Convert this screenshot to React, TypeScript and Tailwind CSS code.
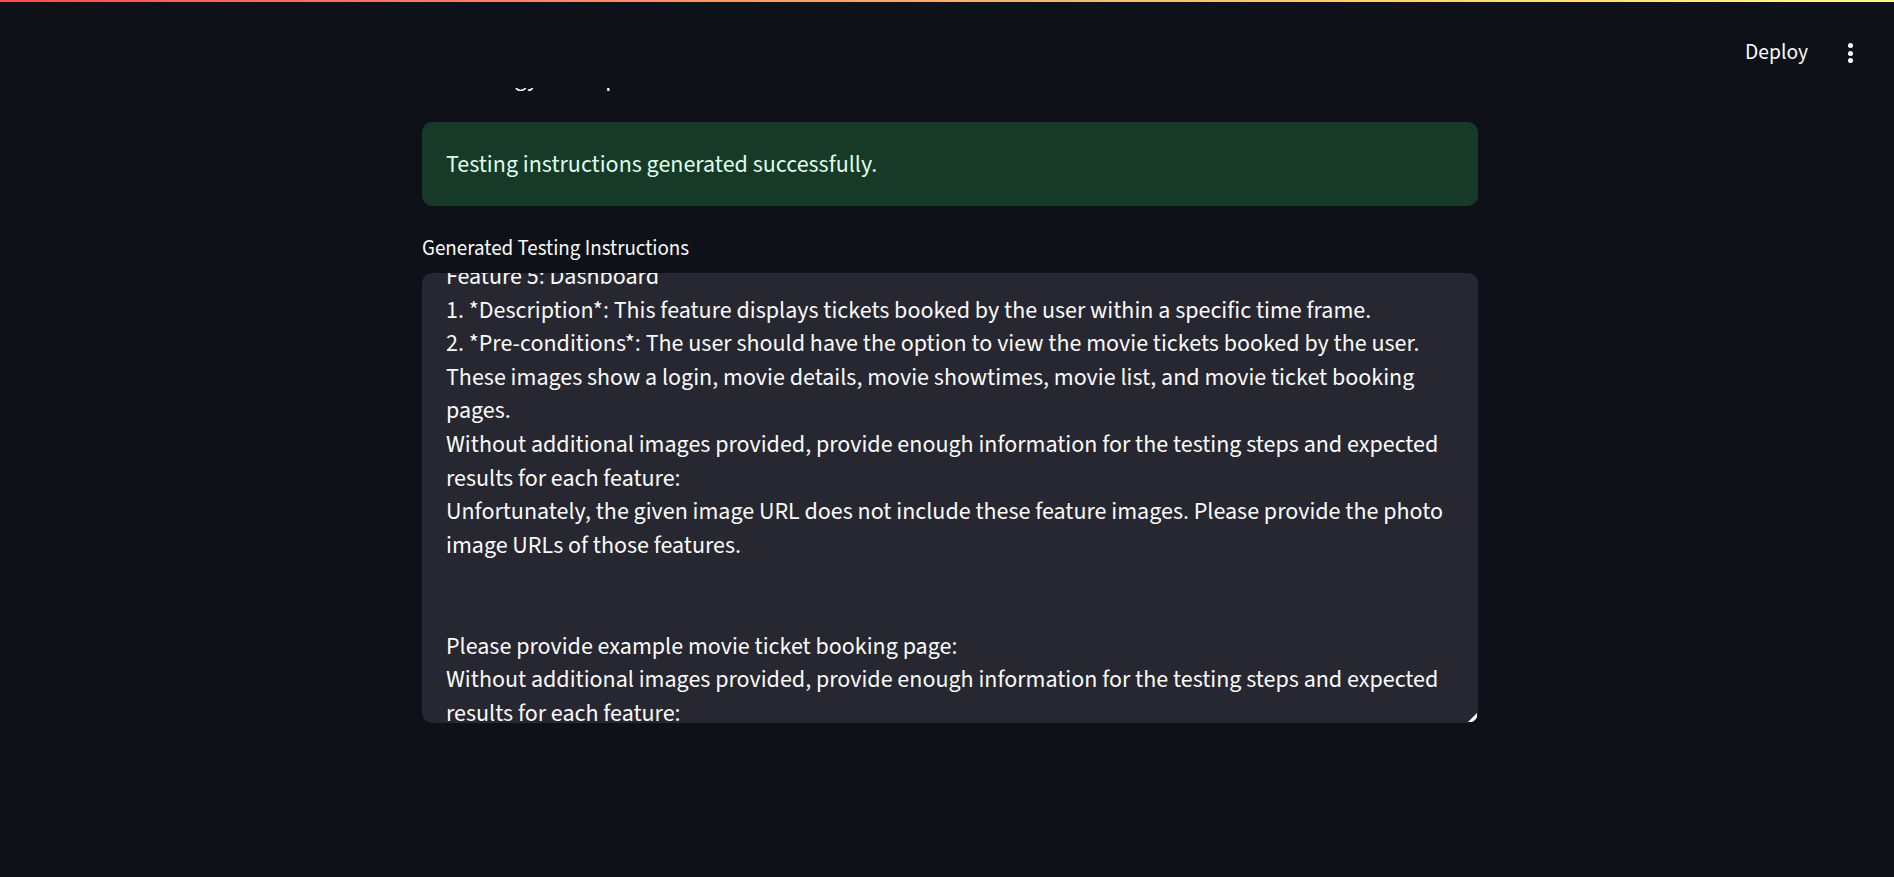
import React from "react";

const lines: string[] = [
  "Feature 5: Dashboard",
  "1. *Description*: This feature displays tickets booked by the user within a specific time frame.",
  "2. *Pre-conditions*: The user should have the option to view the movie tickets booked by the user.",
  "These images show a login, movie details, movie showtimes, movie list, and movie ticket booking",
  "pages.",
  "Without additional images provided, provide enough information for the testing steps and expected",
  "results for each feature:",
  "Unfortunately, the given image URL does not include these feature images. Please provide the photo",
  "image URLs of those features.",
  "",
  "",
  "Please provide example movie ticket booking page:",
  "Without additional images provided, provide enough information for the testing steps and expected",
  "results for each feature:",
  "Please provide the image URLs for the remaining features.",
];

const font = { fontFamily: '"Source Sans Pro", "Source Sans 3", Lato, "Liberation Sans", sans-serif' };

export default function App() {
  return (
    <div className="min-h-[877px] w-full bg-[#0e1117] text-[#fafafa]" style={font}>
      <div className="h-[2px] w-full bg-gradient-to-r from-[#ff4b4b] to-[#fffd80]" />
      <div className="flex h-[86px] items-start justify-end pr-[41px] pt-[28px]">
        <div className="flex h-[46px] items-center gap-[40px]">
          <span className="text-[21.5px] leading-[46px] text-[#fafafa]">Deploy</span>
          <div className="flex flex-col items-center gap-[2.5px]">
            <span className="block h-[5px] w-[5px] rounded-full bg-white" />
            <span className="block h-[5px] w-[5px] rounded-full bg-white" />
            <span className="block h-[5px] w-[5px] rounded-full bg-white" />
          </div>
        </div>
      </div>
      <div className="ml-[422px] w-[1056px]">
        <div className="h-[4px] overflow-hidden">
          <div className="-mt-[21px] whitespace-nowrap pl-[0px] text-[24px] leading-[24px]">
            Technology and input
          </div>
        </div>
        <div className="mt-[30px] flex h-[84px] items-center rounded-[10px] bg-[#173928] px-[24px] pt-[2px]">
          <span className="text-[24px] text-[#dffde9]">Testing instructions generated successfully.</span>
        </div>
        <div className="mt-[29px] text-[21px] leading-[26px] text-[#fafafa]">Generated Testing Instructions</div>
        <div className="relative mt-[12px] h-[450px] overflow-hidden rounded-[10px] bg-[#262730]">
          <div className="-mt-[13px] px-[24px] text-[24px] leading-[33.6px] text-[#fafafa]">
            {lines.map((l, i) => (
              <div key={i} className="h-[33.6px] whitespace-nowrap">
                {l}
              </div>
            ))}
          </div>
          <svg className="absolute bottom-[1px] right-[1px]" width="9" height="9" viewBox="0 0 9 9">
            <polygon points="9,0 9,9 0,9" fill="#ffffff" />
          </svg>
        </div>
      </div>
    </div>
  );
}
